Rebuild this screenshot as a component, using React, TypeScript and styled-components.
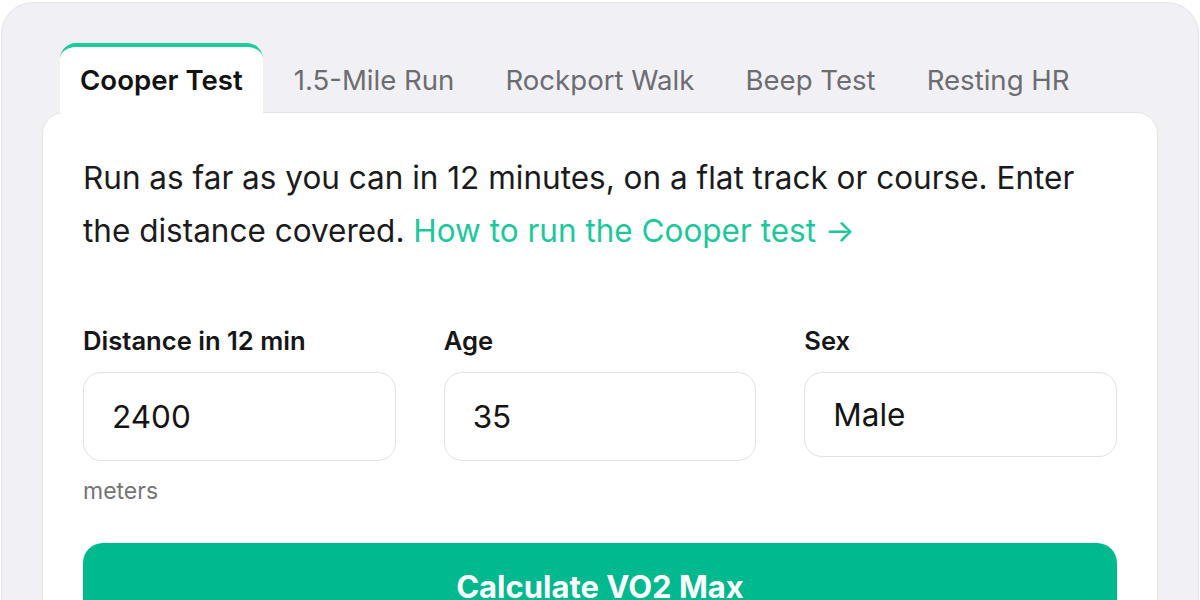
import React, { useState } from 'react';
import styled, { createGlobalStyle } from 'styled-components';

const GlobalStyle = createGlobalStyle`
  html, body {
    margin: 0;
    padding: 0;
    background: #ffffff;
    font-family: Inter, "Noto Sans", sans-serif;
    -webkit-font-smoothing: antialiased;
  }
  * { box-sizing: border-box; }
`;

const Shell = styled.div`
  margin: 2px 1px 0 1px;
  height: 640px;
  background: #f1f1f5;
  border: 1px solid #e3e3e8;
  border-radius: 32px;
  padding: 40px 40px 0 40px;
  overflow: hidden;
`;

const TabBar = styled.div`
  display: flex;
  gap: 11px;
  padding-left: 18px;
`;

const Tab = styled.button<{ $active?: boolean }>`
  position: relative;
  z-index: 1;
  height: 70px;
  margin-bottom: -1px;
  padding: 0 20px;
  border: none;
  border-top: 4px solid ${p => (p.$active ? '#1dcb9b' : 'transparent')};
  border-radius: 16px 16px 0 0;
  background: ${p => (p.$active ? '#ffffff' : 'transparent')};
  color: ${p => (p.$active ? '#121212' : '#6c6c71')};
  font-family: Inter, sans-serif;
  font-size: 27.6px;
  font-weight: ${p => (p.$active ? 600 : 400)};
  cursor: pointer;
`;

const Panel = styled.div`
  background: #ffffff;
  border: 1px solid #e4e4e8;
  border-radius: 22px;
  padding: 38px 40px 40px 40px;
`;

const Intro = styled.p`
  margin: 0;
  font-size: 31.5px;
  line-height: 53px;
  color: #1b1b1d;
`;

const Link = styled.a`
  color: #1cc89b;
  text-decoration: none;
`;

const Fields = styled.div`
  display: grid;
  grid-template-columns: 1fr 1fr 1fr;
  column-gap: 48px;
  margin-top: 69px;
`;

const Field = styled.div`
  display: flex;
  flex-direction: column;
`;

const Label = styled.label`
  font-size: 25.6px;
  line-height: 30px;
  font-weight: 600;
  color: #161618;
  margin-bottom: 16px;
`;

const Input = styled.input`
  height: 89px;
  width: 100%;
  border: 1.5px solid #e2e2e4;
  border-radius: 18px;
  padding: 0 28px;
  font-family: Inter, sans-serif;
  font-size: 31.5px;
  color: #141414;
  background: #fff;
  outline: none;
`;

const Select = styled.select`
  height: 85px;
  width: 100%;
  border: 1.5px solid #e2e2e4;
  border-radius: 18px;
  padding: 0 28px;
  font-family: Inter, sans-serif;
  font-size: 31.5px;
  color: #141414;
  background: #fff;
  appearance: none;
  outline: none;
`;

const Hint = styled.span`
  margin-top: 17px;
  font-size: 23px;
  line-height: 26px;
  color: #747478;
`;

const CalcButton = styled.button`
  width: 100%;
  height: 86px;
  margin-top: 39px;
  border: none;
  border-radius: 20px;
  background: #00b98f;
  color: #ffffff;
  font-family: Inter, sans-serif;
  font-size: 31px;
  font-weight: 700;
  cursor: pointer;
`;

const tabs = ['Cooper Test', '1.5-Mile Run', 'Rockport Walk', 'Beep Test', 'Resting HR'];

export default function App() {
  const [active, setActive] = useState(0);
  const [distance, setDistance] = useState('2400');
  const [age, setAge] = useState('35');
  const [sex, setSex] = useState('Male');

  return (
    <>
      <GlobalStyle />
      <Shell>
        <TabBar>
          {tabs.map((t, i) => (
            <Tab key={t} $active={i === active} onClick={() => setActive(i)}>
              {t}
            </Tab>
          ))}
        </TabBar>
        <Panel>
          <Intro>
            Run as far as you can in 12 minutes, on a flat track or course. Enter the distance covered.{' '}
            <Link href="#">How to run the Cooper test →</Link>
          </Intro>
          <Fields>
            <Field>
              <Label>Distance in 12 min</Label>
              <Input value={distance} onChange={e => setDistance(e.target.value)} />
              <Hint>meters</Hint>
            </Field>
            <Field>
              <Label>Age</Label>
              <Input value={age} onChange={e => setAge(e.target.value)} />
            </Field>
            <Field>
              <Label>Sex</Label>
              <Select value={sex} onChange={e => setSex(e.target.value)}>
                <option>Male</option>
                <option>Female</option>
              </Select>
            </Field>
          </Fields>
          <CalcButton>Calculate VO2 Max</CalcButton>
        </Panel>
      </Shell>
    </>
  );
}
